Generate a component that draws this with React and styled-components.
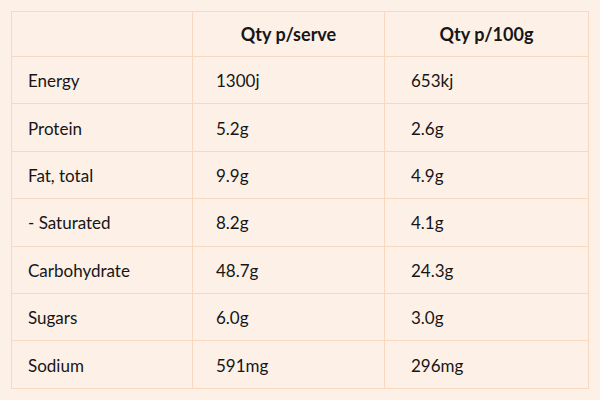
import React from "react";
import styled, { createGlobalStyle } from "styled-components";

const Global = createGlobalStyle`
  html, body { margin: 0; padding: 0; background: #fdf0e7; }
  body { font-family: Lato, "Noto Sans", sans-serif; color: #161616; }
`;

const Page = styled.div`
  width: 600px;
  height: 400px;
  box-sizing: border-box;
  padding: 11px 12px 0 11px;
  background: #fdf0e7;
`;

const Table = styled.table`
  width: 577px;
  border-collapse: collapse;
  table-layout: fixed;
  border: 1px solid #f8d8c0;
`;

const Col = styled.col`
  width: ${(p) => p.$w}px;
`;

const Th = styled.th`
  height: 44px;
  padding: 0;
  border: 1px solid #f8d8c0;
  font-size: 18px;
  line-height: 22px;
  font-weight: 700;
  text-align: center;
  vertical-align: middle;
`;

const Td = styled.td`
  box-sizing: border-box;
  height: 47.4px;
  padding: 2px 0 0 ${(p) => p.$pad}px;
  border: 1px solid #f8d8c0;
  font-size: 17px;
  line-height: 20px;
  font-weight: 400;
  text-align: left;
  vertical-align: middle;
`;

const rows = [
  ["Energy", "1300j", "653kj"],
  ["Protein", "5.2g", "2.6g"],
  ["Fat, total", "9.9g", "4.9g"],
  ["- Saturated", "8.2g", "4.1g"],
  ["Carbohydrate", "48.7g", "24.3g"],
  ["Sugars", "6.0g", "3.0g"],
  ["Sodium", "591mg", "296mg"],
];

const pads = [16, 23, 26];

export default function App() {
  return (
    <>
      <Global />
      <Page>
        <Table>
          <colgroup>
            <Col $w={181} />
            <Col $w={192} />
            <Col $w={204} />
          </colgroup>
          <thead>
            <tr>
              <Th></Th>
              <Th>Qty p/serve</Th>
              <Th>Qty p/100g</Th>
            </tr>
          </thead>
          <tbody>
            {rows.map((r) => (
              <tr key={r[0]}>
                {r.map((c, i) => (
                  <Td key={i} $pad={pads[i]}>
                    {c}
                  </Td>
                ))}
              </tr>
            ))}
          </tbody>
        </Table>
      </Page>
    </>
  );
}
